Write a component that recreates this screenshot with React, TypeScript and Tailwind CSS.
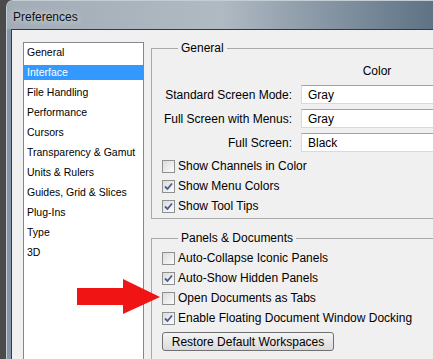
import { ReactNode } from 'react';

const categories = [
  'General',
  'Interface',
  'File Handling',
  'Performance',
  'Cursors',
  'Transparency & Gamut',
  'Units & Rulers',
  'Guides, Grid & Slices',
  'Plug-Ins',
  'Type',
  '3D',
];

const Checkbox = ({ checked, label }: { checked: boolean; label: string }) => (
  <div className="flex items-center h-[20px] gap-[3px]">
    <div className="w-[13px] h-[13px] border border-[#8e8f8f] bg-gradient-to-br from-[#dcdcdc] to-[#fbfbfb] flex items-center justify-center shrink-0">
      {checked && (
        <svg width="9" height="9" viewBox="0 0 9 9">
          <path d="M1 4.5 L3.5 7 L8 1.5" fill="none" stroke="#4a5d8f" strokeWidth="1.8" />
        </svg>
      )}
    </div>
    <span className="whitespace-nowrap">{label}</span>
  </div>
);

const Group = ({ title, children }: { title: string; children: ReactNode }) => (
  <fieldset className="w-[320px] border border-[#a9a9a9] pl-[10px]">
    <legend className="ml-[16px] px-[3px] leading-[14px]">{title}</legend>
    {children}
  </fieldset>
);

const SelectRow = ({ label, value }: { label: string; value: string }) => (
  <div className="flex items-center gap-[9px] h-[19px]">
    <div className="w-[130px] flex justify-end shrink-0">
      <span className="whitespace-nowrap shrink-0">{label}</span>
    </div>
    <div className="w-[152px] h-[19px] bg-white border border-[#dadada] border-t-[#a3a3a3] flex items-center pl-[6px]">
      {value}
    </div>
  </div>
);

export default function App() {
  return (
    <div
      className="relative w-[433px] h-[359px] overflow-hidden bg-[#4b4b4b] pl-[6px] text-black"
      style={{ fontFamily: '"Liberation Sans", Arial, sans-serif' }}
    >
      <div className="flex flex-col h-full rounded-tl-[7px] border-l border-t border-[#c4ccd4] bg-[#8598aa] overflow-hidden">
        {/* Title bar */}
        <div className="h-[28px] shrink-0 flex items-center pl-[6px] pt-[3px] bg-gradient-to-r from-[#a2acb6] via-[#b0bac3] to-[#5f7385] text-[12px] text-[#111] [text-shadow:0_0_6px_#e6ecf2]">
          Preferences
        </div>

        {/* Dialog body */}
        <div className="flex-1 ml-[4px] border-l border-t border-[#2e3a46] bg-[#f0f0f0] flex pl-[11px] pt-[11px]">
          {/* Category list */}
          <div className="w-[121px] mt-[1px] shrink-0 bg-white border border-[#828790] pt-[2px] text-[10.5px]">
            {categories.map((c) => (
              <div
                key={c}
                className={`h-[15px] mb-[5px] flex items-center pl-[3px] whitespace-nowrap ${
                  c === 'Interface' ? 'bg-[#3399ff] text-white' : ''
                }`}
              >
                {c}
              </div>
            ))}
          </div>

          {/* Settings */}
          <div className="flex-1 ml-[7px] overflow-hidden text-[12px] flex flex-col gap-[12px]">
            <Group title="General">
              <div className="pt-[9px] pb-[2px]">
                <div className="flex h-[14px] leading-[14px]">
                  <div className="w-[139px] shrink-0" />
                  <div className="w-[152px] text-center">Color</div>
                </div>
                <div className="flex flex-col gap-[5px] mt-[7px]">
                  <SelectRow label="Standard Screen Mode:" value="Gray" />
                  <SelectRow label="Full Screen with Menus:" value="Gray" />
                  <SelectRow label="Full Screen:" value="Black" />
                </div>
                <div className="mt-[4px]">
                  <Checkbox checked={false} label="Show Channels in Color" />
                  <Checkbox checked label="Show Menu Colors" />
                  <Checkbox checked label="Show Tool Tips" />
                </div>
              </div>
            </Group>

            <Group title="Panels & Documents">
              <div className="pt-[3px] pb-[12px]">
                <Checkbox checked={false} label="Auto-Collapse Iconic Panels" />
                <Checkbox checked label="Auto-Show Hidden Panels" />
                <Checkbox checked={false} label="Open Documents as Tabs" />
                <Checkbox checked label="Enable Floating Document Window Docking" />
                <button className="mt-[4px] w-[172px] h-[19px] border border-[#707070] rounded-[3px] bg-gradient-to-b from-[#f4f4f4] to-[#dadada] flex items-center justify-center whitespace-nowrap">
                  Restore Default Workspaces
                </button>
              </div>
            </Group>
          </div>
        </div>
      </div>

      {/* Red arrow pointing at the option */}
      <svg className="absolute left-[77px] top-[279px]" width="84" height="36" viewBox="0 0 84 36">
        <polygon points="0,9 46,9 46,0 83,18 46,35 46,26 0,26" fill="#f01414" />
      </svg>
    </div>
  );
}
